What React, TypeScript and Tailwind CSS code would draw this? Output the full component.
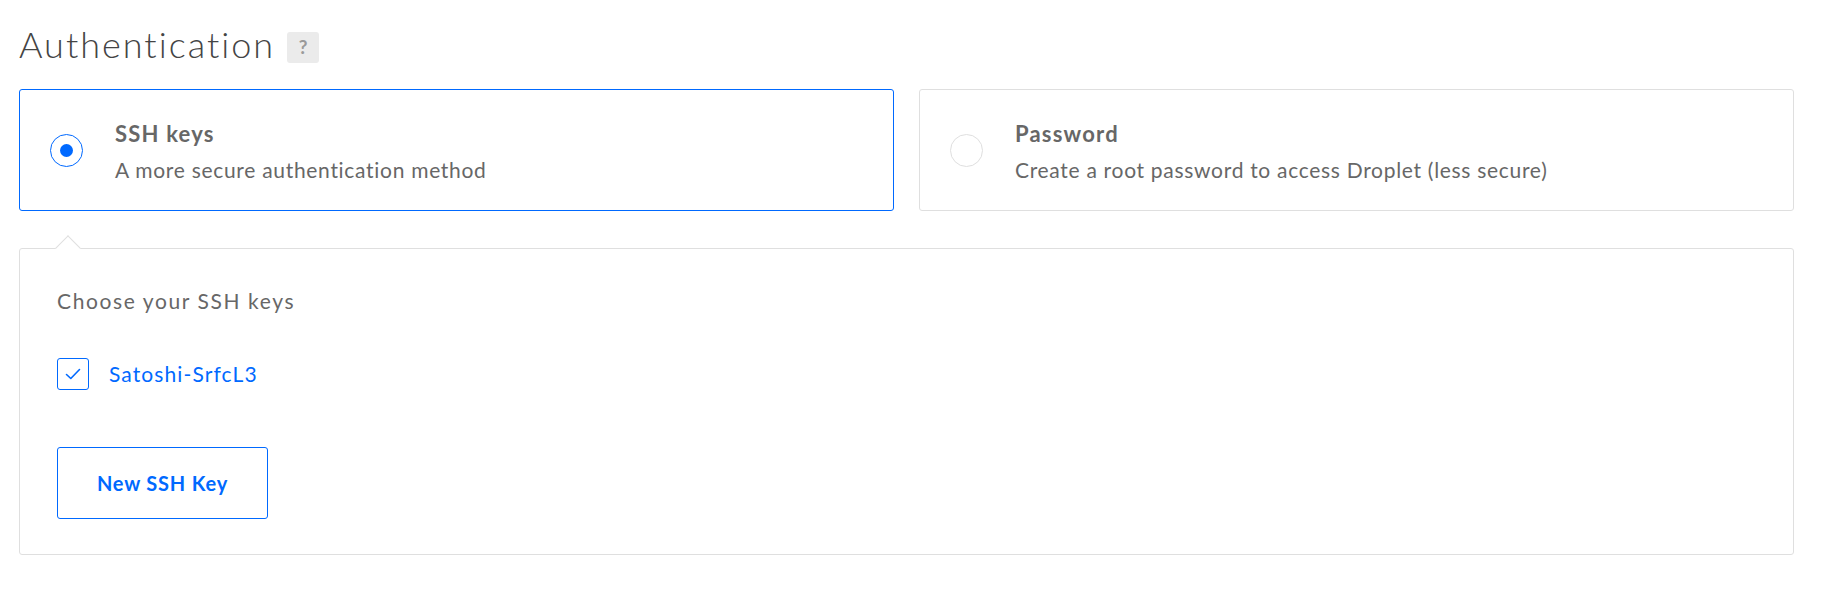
import { useState } from "react";

const font = { fontFamily: "Lato, 'Open Sans', sans-serif" };

function Radio({ checked }: { checked: boolean }) {
  return (
    <span
      className={
        "flex h-[33px] w-[33px] shrink-0 items-center justify-center rounded-full border bg-white " +
        (checked ? "border-[#0069ff]" : "border-[#dfdfdf]")
      }
    >
      {checked && <span className="h-[13px] w-[13px] rounded-full bg-[#0069ff]" />}
    </span>
  );
}

function MethodCard({
  title,
  desc,
  active,
  onClick,
}: {
  title: string;
  desc: string;
  active: boolean;
  onClick: () => void;
}) {
  return (
    <button
      onClick={onClick}
      className={
        "flex h-[122px] items-center gap-[32px] rounded-[3px] border bg-white pl-[30px] text-left " +
        (active ? "border-[#0069ff]" : "border-[#dfdfdf]")
      }
    >
      <Radio checked={active} />
      <div>
        <div className="text-[22px] font-bold leading-[36px] tracking-[1.2px] text-[#676767]">{title}</div>
        <div className="mt-[3px] text-[21px] leading-[30px] tracking-[0.7px] text-[#676767]">{desc}</div>
      </div>
    </button>
  );
}

export default function App() {
  const [method, setMethod] = useState<"ssh" | "password">("ssh");
  const [keyChecked, setKeyChecked] = useState(true);

  return (
    <div className="min-h-[592px] bg-white pl-[19px] pt-[22px]" style={font}>
      <div className="w-[1775px]">
        <div className="flex items-start">
          <h1 className="text-[36px] font-light leading-[44px] tracking-[2px] text-[#444]">Authentication</h1>
          <span className="ml-[12px] mt-[10px] flex h-[31px] w-[32px] items-center justify-center rounded-[3px] bg-[#ebebeb] text-[19px] font-bold text-[#9a9a9a]">
            ?
          </span>
        </div>

        <div className="mt-[23px] grid grid-cols-2 gap-[25px]">
          <MethodCard
            title="SSH keys"
            desc="A more secure authentication method"
            active={method === "ssh"}
            onClick={() => setMethod("ssh")}
          />
          <MethodCard
            title="Password"
            desc="Create a root password to access Droplet (less secure)"
            active={method === "password"}
            onClick={() => setMethod("password")}
          />
        </div>

        <div className="relative mt-[37px] rounded-[3px] border border-[#dfdfdf] bg-white px-[37px] pb-[35px] pt-[37px]">
          <span className="absolute left-[39px] top-[-10px] h-[18px] w-[18px] rotate-45 border-l border-t border-[#dfdfdf] bg-white" />
          <p className="text-[21px] leading-[30px] tracking-[1.6px] text-[#676767]">Choose your SSH keys</p>

          <label className="mt-[42px] flex cursor-pointer items-center gap-[20px]">
            <span
              onClick={() => setKeyChecked(!keyChecked)}
              className="flex h-[32px] w-[32px] items-center justify-center rounded-[3px] border border-[#0069ff]"
            >
              {keyChecked && (
                <svg width="16" height="12" viewBox="0 0 16 12" fill="none">
                  <path d="M1.5 6.5 L5.8 10.5 L14.5 1.5" stroke="#0069ff" strokeWidth="1.6" strokeLinecap="round" strokeLinejoin="round" />
                </svg>
              )}
            </span>
            <span className="text-[21px] leading-[30px] tracking-[1.1px] text-[#0069ff]">Satoshi-SrfcL3</span>
          </label>

          <button className="mt-[57px] flex h-[72px] w-[211px] items-center justify-center rounded-[3px] border border-[#0069ff] text-[20px] font-bold tracking-[0.8px] text-[#0069ff]">
            New SSH Key
          </button>
        </div>
      </div>
    </div>
  );
}
